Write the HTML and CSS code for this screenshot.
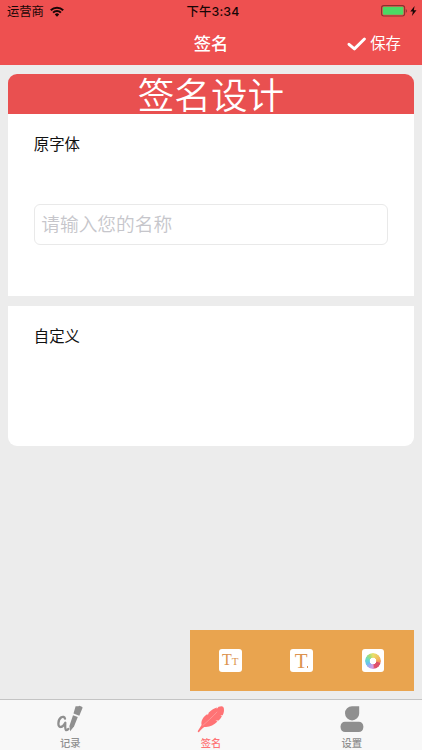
FILE: index.html
```
<!DOCTYPE html>
<html lang="zh-CN">
<head>
  <meta charset="UTF-8">
  <meta name="viewport" content="width=device-width, initial-scale=1.0">
  <title>签名</title>
  <link rel="stylesheet" href="styles.css">
</head>
<body>
  <header class="header">
    <div class="status">
      <div class="carrier">
        <span>运营商</span>
        <svg class="wifi" viewBox="0 0 14 11">
          <g fill="none" stroke="#170606" stroke-width="2">
            <path d="M0.8 4.2a8.8 8.8 0 0 1 12.4 0"/>
            <path d="M3.1 6.6a5.5 5.5 0 0 1 7.8 0"/>
          </g>
          <path d="M4.8 8.4a3.1 3.1 0 0 1 4.4 0L7 10.7z" fill="#170606"/>
        </svg>
      </div>
      <div class="time">下午3:34</div>
      <div class="power">
        <svg class="battery" viewBox="0 0 27 12">
          <rect x="0.6" y="0.6" width="23" height="10.4" rx="2.2" fill="none" stroke="#8c3030" stroke-width="1.1"/>
          <rect x="1.8" y="1.8" width="20.6" height="8" rx="1" fill="#4cd964"/>
          <path d="M24.8 3.9c1.5.5 1.5 3.4 0 3.9z" fill="#8c3030"/>
        </svg>
        <svg class="bolt" viewBox="0 0 7 10">
          <path d="M4.6 0L0.3 5.6h2.6L1.9 10l4.6-5.8H3.8z" fill="#170606"/>
        </svg>
      </div>
    </div>
    <div class="nav">
      <h1>签名</h1>
      <button class="save">
        <svg class="check" viewBox="0 0 20 14">
          <path d="M2 7.3l5.4 4.6L17.4 2" fill="none" stroke="#fff" stroke-width="2.9" stroke-linecap="round" stroke-linejoin="round"/>
        </svg>
        <span>保存</span>
      </button>
    </div>
  </header>

  <main class="content">
    <h2 class="banner">签名设计</h2>
    <section class="card origin">
      <h3>原字体</h3>
      <input class="name" type="text" placeholder="请输入您的名称">
    </section>
    <section class="card custom">
      <h3>自定义</h3>
    </section>

    <div class="tools">
      <button class="tool size"><span class="big">T</span><span class="small">T</span></button>
      <button class="tool font">T<span class="dot"></span></button>
      <button class="tool color"><span class="wheel"></span></button>
    </div>
  </main>

  <footer class="tabs">
    <a class="tab">
      <svg viewBox="0 0 28 28">
        <path d="M9 13.6C7.8 9.8 2.6 12.4 2.4 18.2c-.2 5 3.6 5.2 6.9-.4-.2 3.8-.2 6.4.6 7.2.7.4 1.5-.2 2.5-1" fill="none" stroke="#8f8f8f" stroke-width="2.3" stroke-linecap="round" stroke-linejoin="round"/>
        <path d="M17 10.2l4.8 1.7-3.8 9.7-3.9 4.6-.7-5.2z" fill="#8f8f8f"/>
        <path d="M19.6 1.2h2.8l1-.4 2.5 1c.6.3.7.8.5 1.5l-3.1 7.4-5.8-2.2z" fill="#8f8f8f"/>
      </svg>
      <span>记录</span>
    </a>
    <a class="tab active">
      <svg viewBox="0 0 28 28">
        <path d="M.8 26.1c1.4-2.3 2.4-4.2 3.8-6.2-.8-3.8 1.2-7.7 5.7-10.9l.5 1.3 1-2.9c2.7-2.4 5.5-4.3 8.2-5l-.4 1.6 2-2.2c2.2-.8 3.9-.7 4.7.1 1.3 2.2.8 5.5-.6 8.3l-2.4.4 1.6.6c-.8 1.7-1.9 3.2-3.2 4.3l-3.2.1 2 1c-3.9 3.7-8.4 6-13.2 5.3-2 1.3-3.5 2.8-5.2 5.2-.7.6-1.6-.2-1.3-1z" fill="#ff7375"/>
        <path d="M5.6 20.6C10.4 16.4 15.4 12 20.2 6.8" fill="none" stroke="#fbb8b8" stroke-width=".5"/>
      </svg>
      <span>签名</span>
    </a>
    <a class="tab">
      <svg viewBox="0 0 28 28">
        <path d="M14 1.2h7.2v7.2a7.1 7.1 0 1 1-7.2-7.2z" fill="#8f8f8f"/>
        <rect x="2.6" y="16.8" width="22.7" height="10.2" rx="4.4" fill="#8f8f8f"/>
      </svg>
      <span>设置</span>
    </a>
  </footer>
</body>
</html>
```
FILE: styles.css
```
* {
  box-sizing: border-box;
}

body {
  margin: 0;
  height: 100vh;
  display: flex;
  flex-direction: column;
  overflow: hidden;
  background: #ececec;
  font-family: Inter, "Noto Sans CJK SC", sans-serif;
}

h1, h2, h3 {
  margin: 0;
  font-weight: 400;
}

button {
  border: none;
  padding: 0;
  background: none;
  font-family: inherit;
}

svg {
  display: block;
  flex-shrink: 0;
}

.header {
  height: 65px;
  background: #ee5050;
  color: #fff;
}

.status {
  display: grid;
  grid-template-columns: 1fr auto 1fr;
  align-items: center;
  height: 22px;
  padding: 0 5px 0 7px;
  color: #170606;
  font-size: 12.3px;
  line-height: 22px;
}

.carrier {
  display: flex;
  align-items: center;
  gap: 6px;
}

.carrier span {
  padding-top: 1px;
}

.wifi {
  width: 14px;
  height: 11px;
  margin-bottom: 1px;
}

.time {
  padding-top: 1px;
  padding-left: 2px;
  font-weight: 500;
  letter-spacing: 0.2px;
}

.power {
  display: flex;
  justify-content: flex-end;
  align-items: center;
  gap: 2px;
  margin-bottom: 1px;
}

.battery {
  width: 27px;
  height: 12px;
}

.bolt {
  width: 7px;
  height: 10px;
}

.nav {
  display: grid;
  grid-template-columns: 1fr auto 1fr;
  align-items: center;
  height: 43px;
  padding-right: 21px;
  padding-left: 21px;
}

.nav h1 {
  grid-column: 2;
  font-size: 17.3px;
  font-weight: 500;
  line-height: 43px;
}

.save {
  display: flex;
  justify-content: flex-end;
  align-items: center;
  gap: 3px;
  color: #fff;
  font-size: 15.4px;
  line-height: 43px;
}

.check {
  width: 20px;
  height: 14px;
}

.content {
  flex: 1;
  display: flex;
  flex-direction: column;
  padding: 8.5px 8.5px 8px 8.3px;
}

.banner {
  height: 40.5px;
  border-radius: 9px 9px 0 0;
  background: #e95050;
  color: #fff;
  font-size: 36.6px;
  font-weight: 350;
  line-height: 44px;
  text-align: center;
}

.card {
  padding: 19px 25.5px 0;
  background: #fff;
}

.card h3 {
  color: #111;
  font-size: 15.4px;
  line-height: 24px;
}

.origin {
  height: 181.5px;
}

.name {
  display: block;
  width: 100%;
  height: 41px;
  margin-top: 47px;
  padding: 0 6.5px;
  border: 1px solid #e9e9e9;
  border-radius: 6px;
  background: #fff;
  font-family: inherit;
  font-size: 18.7px;
}

.name::placeholder {
  color: #c6c6cb;
  font-weight: 350;
}

.custom {
  height: 140.5px;
  margin-top: 10px;
  border-radius: 0 0 9px 9px;
}

.tools {
  display: flex;
  justify-content: space-between;
  align-items: center;
  align-self: flex-end;
  width: 224px;
  height: 61px;
  margin-top: auto;
  padding: 0 29.5px;
  background: #e9a44f;
}

.tool {
  display: flex;
  justify-content: center;
  align-items: center;
  width: 22.5px;
  height: 22.5px;
  border-radius: 3px;
  background: #fff;
  color: #dc9350;
  font-family: "Liberation Serif", serif;
}

.size {
  align-items: baseline;
  line-height: 22px;
}

.big {
  font-size: 16px;
}

.small {
  font-size: 11px;
  line-height: 12px;
}

.font {
  font-size: 21px;
  line-height: 22px;
}

.dot {
  align-self: flex-end;
  width: 1.5px;
  height: 1.5px;
  margin-bottom: 4px;
  margin-left: -1px;
  background: #dc9350;
}

.wheel {
  width: 16px;
  height: 16px;
  border-radius: 50%;
  background: conic-gradient(#e9e06a, #f4b65c 20%, #ef8a5a 28%, #dc4f68 30%, #e0526e 46%, #d99ce0 50%, #a9a4ee 60%, #67c4ee 68%, #6bdcc4 80%, #a4dc77 90%, #e9e06a);
  mask: radial-gradient(circle, transparent 3px, #000 3.6px);
}

.tabs {
  display: flex;
  height: 51px;
  border-top: 1px solid #c4c4c4;
  background: #f8f8f8;
}

.tab {
  flex: 1;
  display: flex;
  flex-direction: column;
  align-items: center;
  padding-top: 5px;
  color: #8f8f8f;
  font-size: 10.3px;
  font-weight: 500;
  line-height: 15px;
}

.tab svg {
  width: 28px;
  height: 28px;
  margin-bottom: 3px;
}

.tab.active {
  color: #ff7375;
}
```
